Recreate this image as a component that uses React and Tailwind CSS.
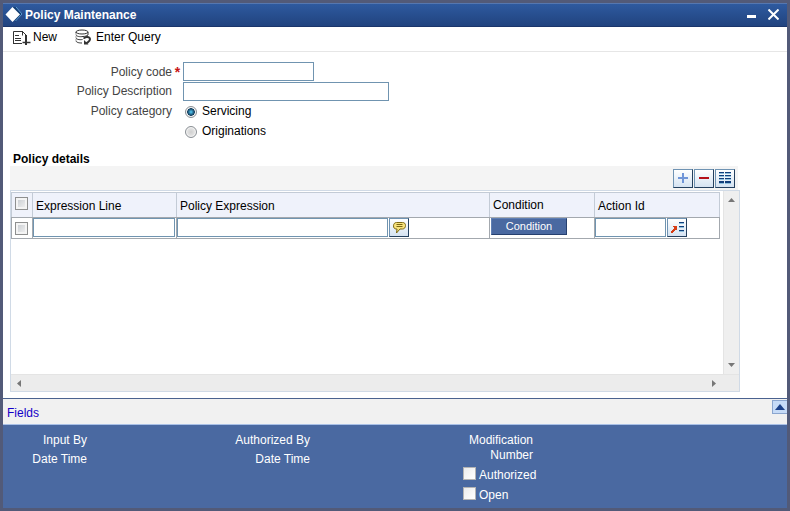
import { useState } from "react"

const inputClass = "block border border-[#7094b0] bg-white px-1 text-xs text-black outline-none rounded-none"
const gridButton =
  "flex h-[19px] w-5 shrink-0 items-center justify-center border border-[#6f93b3] border-r-[#24405f] border-b-[#24405f] bg-linear-to-b from-white to-[#d5e3f2]"

function CheckBox({ label, variant = "grid" }) {
  const look =
    variant === "grid"
      ? "border-[#8e8f8f] bg-linear-to-br from-[#c4c8cd] to-[#f6f6f6] shadow-[inset_0_0_0_2px_#f4f4f4]"
      : "border-[#b4b4b4] bg-linear-to-br from-[#ececec] to-white"
  return (
    <input
      type="checkbox"
      aria-label={label}
      className={`block h-[13px] w-[13px] shrink-0 appearance-none border checked:bg-[#4a69a1] ${look}`}
    />
  )
}

function RadioOption({ label, checked, onChange }) {
  return (
    <label className="flex h-5 items-center gap-[5px] text-black">
      <input
        type="radio"
        name="category"
        checked={checked}
        onChange={onChange}
        className="mt-0.5 h-3 w-3 appearance-none rounded-full border border-[#8a8f94] bg-radial from-[#d0d0d0] to-[#f4f4f4] shadow-[inset_0_0_0_1px_#f4f4f4] checked:bg-radial checked:from-[#49b3dc] checked:from-10% checked:via-[#123c5c] checked:via-50% checked:to-[#f4f4f4] checked:to-60%"
      />
      {label}
    </label>
  )
}

function LogoIcon() {
  return (
    <svg width="18" height="18" viewBox="0 0 18 18" aria-hidden="true">
      <path d="M8 1h3l6.500 7L10 16z" fill="#123c72" />
      <path d="M11 1l6 7-6.500 7" fill="none" stroke="#5c9ad0" />
      <path d="M7.500 1L15 8.500 7.500 16 .5 8.500z" fill="#fff" />
    </svg>
  )
}

function NewIcon() {
  return (
    <svg width="18" height="15" viewBox="0 0 18 15" fill="none" stroke="#333" aria-hidden="true">
      <path d="M.5 14V1.500H9M0 13.500h9M9 1l4 4M9.500 1.500v4M2 5.500h4M2 8.500h6M2 10.500h6" />
      <path d="M13 5v10" strokeWidth="2" />
      <path d="M9.500 12.500h8" strokeWidth="1.500" />
    </svg>
  )
}

function QueryIcon() {
  return (
    <svg width="17" height="16" viewBox="0 0 17 16" fill="none" stroke="#333" aria-hidden="true">
      <ellipse cx="7" cy="3" rx="6" ry="2" />
      <path d="M13 3v3M1 5.500c0 2 4 2.500 7 2 2-.1 4-.5 5-1.500M1 8.500c0 2 3.500 2.500 6.500 2M1 11.500c0 2 3 2.500 6 2.500" />
      <path d="M1 3v1.500M1 7v.5M1 10v.5" />
      <path d="M9 9.800c.5-2.500 6-2.500 6 .5 0 2.200-2 2.700-3.500 4" strokeWidth="2" />
      <path d="M9 11v4.500h4.500z" fill="#333" stroke="none" />
    </svg>
  )
}

function ListIcon() {
  return (
    <svg width="12" height="12" viewBox="0 0 12 12" shapeRendering="crispEdges" aria-hidden="true">
      <path d="M0 1h5v1H0zM6 1h6v1H6zM0 4h5v1H0zM6 4h6v1H6zM0 7h5v1H0zM6 7h6v1H6zM0 11h5v1H0zM6 11h6v1H6z" fill="#8fc0dc" />
      <path d="M0 0h5v1H0zM6 0h6v1H6zM0 3h5v1H0zM6 3h6v1H6zM0 6h5v1H0zM6 6h6v1H6zM0 9h5v2H0zM6 9h6v2H6z" fill="#123f7c" />
    </svg>
  )
}

function NoteIcon() {
  return (
    <svg width="15" height="14" viewBox="0 0 15 14" aria-hidden="true">
      <path
        d="M4.500 1.500h6c2 0 3 1.200 3 3s-1 3.500-3 3.500H8l-3.500 4L5 8H4C2.300 8 1.500 6.500 1.500 4.800s1-3.300 3-3.300z"
        fill="#f7e27c"
        stroke="#7d6812"
      />
      <path d="M4.500 3.500h6M4.500 5.500h6" stroke="#7d6812" />
    </svg>
  )
}

function LovIcon() {
  return (
    <svg width="15" height="13" viewBox="0 0 15 13" shapeRendering="crispEdges" aria-hidden="true">
      <path d="M9 2h5v1H9zM9 6h5v1H9zM9 10h5v1H9z" fill="#8fc0dc" />
      <path d="M9 1h5v1H9zM9 5h5v1H9zM9 9h5v1H9z" fill="#123f7c" />
      <path d="M2 5h5v5L5.500 8.500 3 12H1v-2l3-3z" fill="#d63c14" />
    </svg>
  )
}

function Arrow({ d, width = 7, height = 4 }) {
  return (
    <svg width={width} height={height} viewBox={`0 0 ${width} ${height}`} aria-hidden="true">
      <path d={d} fill="#777" />
    </svg>
  )
}

function TitleBar() {
  return (
    <header className="flex h-6 items-center border-t border-b border-t-[#5577b0] border-b-[#1b356b] bg-linear-to-b from-[#2e5a9f] to-[#21437f] pl-0.5 pr-2 text-white">
      <LogoIcon />
      <h1 className="ml-0.5 flex-1 text-xs leading-5 font-bold">Policy Maintenance</h1>
      <div className="flex items-center gap-3 pb-0.5">
        <button type="button" aria-label="Minimize" className="flex h-4 items-center pt-1">
          <span className="h-[3px] w-[9px] bg-white" />
        </button>
        <button type="button" aria-label="Close" className="flex h-4 items-center">
          <svg width="11" height="11" viewBox="0 0 11 11" stroke="#fff" strokeWidth="2">
            <path d="M.5.5l10 10M10.500.5l-10 10" />
          </svg>
        </button>
      </div>
    </header>
  )
}

function PolicyForm() {
  const [category, setCategory] = useState("Servicing")
  return (
    <div className="grid grid-cols-[169px_11px_1fr] pt-2.5 text-[#444]">
      <label htmlFor="code" className="text-right leading-5">Policy code</label>
      <span className="text-center text-sm leading-5 font-bold text-[#c81414]">*</span>
      <input id="code" required className={`${inputClass} h-[19px] w-[131px]`} />
      <label htmlFor="description" className="text-right leading-[19px]">Policy Description</label>
      <span />
      <input id="description" className={`${inputClass} h-[19px] w-[206px]`} />
      <span id="category-label" className="text-right leading-5">Policy category</span>
      <span />
      <div role="radiogroup" aria-labelledby="category-label" className="pl-0.5">
        {["Servicing", "Originations"].map((name) => (
          <RadioOption key={name} label={name} checked={category === name} onChange={() => setCategory(name)} />
        ))}
      </div>
    </div>
  )
}

function PolicyTable() {
  const head = "border border-[#c3cbd6] border-b-[#a3a8ae] px-[3px] text-left font-normal"
  const cell = "border border-[#a3a8ae] p-0 align-top"
  return (
    <table className="w-full table-fixed border-collapse text-black">
      <colgroup>
        <col className="w-[21px]" />
        <col className="w-36" />
        <col />
        <col className="w-[105px]" />
        <col className="w-[125px]" />
      </colgroup>
      <thead>
        <tr className="h-[25px] bg-[#eff2fb]">
          <th className={`${head} pb-1`}><CheckBox label="Select all rows" /></th>
          <th className={`${head} pt-0.5`}>Expression Line</th>
          <th className={`${head} pt-0.5`}>Policy Expression</th>
          <th className={head}>Condition</th>
          <th className={`${head} pt-0.5`}>Action Id</th>
        </tr>
      </thead>
      <tbody>
        <tr className="h-[21px]">
          <td className={`${cell} px-[3px] pt-1`}><CheckBox label="Select row" /></td>
          <td className={`${cell} pr-px`}>
            <input aria-label="Expression Line" className={`${inputClass} h-[19px] w-full`} />
          </td>
          <td className={cell}>
            <div className="flex gap-px">
              <input aria-label="Policy Expression" className={`${inputClass} h-[19px] w-[211px]`} />
              <button type="button" aria-label="Edit expression" className={gridButton}><NoteIcon /></button>
            </div>
          </td>
          <td className={cell}>
            <button
              type="button"
              className="ml-px block h-[17px] w-[76px] border border-[#5f7fb4] border-r-[#26406f] border-b-[#26406f] bg-[#4a69a1] text-[11px] leading-[15px] text-white"
            >
              Condition
            </button>
          </td>
          <td className={cell}>
            <div className="flex gap-px">
              <input aria-label="Action Id" className={`${inputClass} h-[19px] w-[71px]`} />
              <button type="button" aria-label="Look up action" className={gridButton}><LovIcon /></button>
            </div>
          </td>
        </tr>
      </tbody>
    </table>
  )
}

function PolicyDetails() {
  return (
    <section className="flex flex-1 flex-col pt-[11px] pr-[47px] pb-1.5 pl-[7px]">
      <h2 className="pl-[3px] text-xs leading-[14px] font-bold text-black">Policy details</h2>
      <div className="mr-0.5 flex h-6 items-center justify-end gap-px bg-[#f4f4f4] pr-[3px]">
        <button type="button" aria-label="Add row" className={gridButton}>
          <svg width="12" height="12" viewBox="0 0 12 12"><path d="M6 1v10M1 6h10" stroke="#6f95d8" strokeWidth="2" /></svg>
        </button>
        <button type="button" aria-label="Delete row" className={gridButton}>
          <span className="h-0.5 w-2.5 bg-[#b5121b]" />
        </button>
        <button type="button" aria-label="Single record view" className={gridButton}><ListIcon /></button>
      </div>
      <div className="flex flex-1 flex-col border border-[#d0dae6]">
        <div className="flex flex-1">
          <div className="flex-1 pt-px pr-[3px]">
            <PolicyTable />
          </div>
          <div className="flex w-4 flex-col items-center justify-between border-l border-[#e4e4e4] bg-[#efefef] py-[7px]">
            <button type="button" aria-label="Scroll up"><Arrow d="M0 4L3.500 0 7 4z" /></button>
            <button type="button" aria-label="Scroll down"><Arrow d="M0 0h7L3.500 4z" /></button>
          </div>
        </div>
        <div className="flex h-[17px] items-center justify-between border-t border-[#e4e4e4] bg-[#ececec] pr-[23px] pl-1.5">
          <button type="button" aria-label="Scroll left"><Arrow d="M4 0v7L0 3.500z" width={4} height={7} /></button>
          <button type="button" aria-label="Scroll right"><Arrow d="M0 0l4 3.500L0 7z" width={4} height={7} /></button>
        </div>
      </div>
    </section>
  )
}

function AuditFooter() {
  return (
    <footer className="border-t border-[#4a628f]">
      <div className="flex h-[26px] items-start justify-between border-b border-[#a9c0e6] bg-[#f1f1f1]">
        <a href="#fields" className="pl-1 leading-7 text-[#1400c8]">Fields</a>
        <button type="button" aria-label="Collapse" className="mt-px flex h-3.5 w-[15px] items-center justify-center border border-r-0 border-[#8ba6cf] bg-[#c6dbf7]">
          <svg width="10" height="6" viewBox="0 0 10 6"><path d="M0 6l5-6 5 6z" fill="#1d428a" /></svg>
        </button>
      </div>
      <div className="grid h-[83px] grid-cols-[84px_223px_223px_1fr] bg-[#4a69a1] pt-1.5 text-right leading-[19px] text-white">
        <div>
          <p>Input By</p>
          <p>Date Time</p>
        </div>
        <div>
          <p>Authorized By</p>
          <p>Date Time</p>
        </div>
        <div>
          <p className="pt-0.5 leading-[15px]">Modification<br />Number</p>
          <div className="mt-1 ml-[153px] flex flex-col gap-1 leading-4">
            {["Authorized", "Open"].map((name) => (
              <label key={name} className="flex gap-[3px] whitespace-nowrap">
                <CheckBox label={name} variant="footer" />
                {name}
              </label>
            ))}
          </div>
        </div>
      </div>
    </footer>
  )
}

export default function App() {
  return (
    <main className="flex min-h-screen flex-col border-3 border-[#525a78] bg-white font-['Liberation_Sans',Arial,sans-serif] text-xs">
      <TitleBar />
      <nav className="flex h-[25px] items-center gap-[18px] border-b border-[#e6e6e6] pl-2.5 pb-1 text-black">
        <button type="button" className="flex items-center gap-0.5"><NewIcon />New</button>
        <button type="button" className="flex items-center gap-1"><QueryIcon />Enter Query</button>
      </nav>
      <PolicyForm />
      <PolicyDetails />
      <AuditFooter />
    </main>
  )
}
